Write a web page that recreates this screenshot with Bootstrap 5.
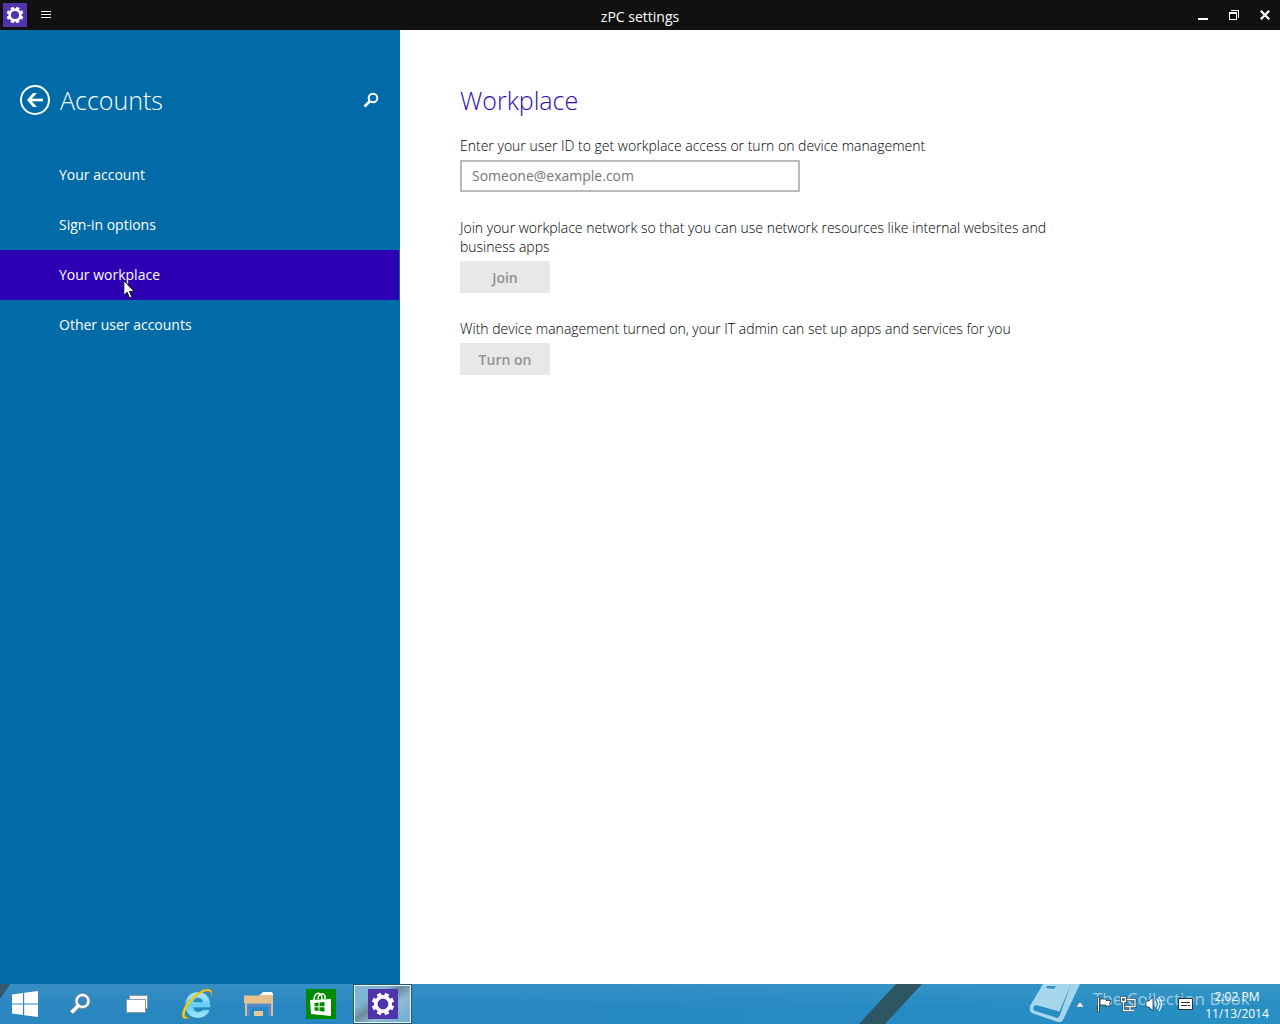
<!DOCTYPE html>
<html lang="en">
<head>
<meta charset="utf-8">
<meta name="viewport" content="width=device-width, initial-scale=1">
<title>zPC settings</title>
<link href="https://cdn.jsdelivr.net/npm/bootstrap@5.3.0/dist/css/bootstrap.min.css" rel="stylesheet">
<style>
  body { font-family: "Open Sans", "Noto Sans", sans-serif; font-size: 14px; line-height: 19px; color: #000; background: #fff; }
  .titlebar { display: grid; grid-template-columns: 1fr auto 1fr; height: 30px; background: #111; color: #fff; }
  .plain-btn { border: 0; padding: 0; background: none; color: inherit; display: inline-flex; align-items: center; justify-content: center; }
  .plain-btn svg, .tray svg { display: block; }
  .win-btn { width: 31px; height: 30px; }
  .app-mark { margin: 0 3px; }
  .side { width: 400px; background: #006ba6; color: #fff; padding-top: 50px; }
  .pane-title { font-size: 25px; line-height: 40px; font-weight: 300; margin: 0; }
  .side-head { height: 40px; margin-bottom: 30px; padding: 0 20px; gap: 10px; }
  .side .nav-link { height: 50px; padding: 15px 59px; line-height: 20px; color: #fff; margin-right: 1px; }
  .side .nav-link.active { background: #2e00b3; }
  .content-pane { padding: 50px 60px; }
  .content-pane .pane-title { color: #3409b4; margin-bottom: 16px; }
  .form-col { max-width: 600px; }
  .form-col label, .form-col p { display: block; margin: 0 0 5px; font-weight: 300; }
  .id-box { width: 340px; height: 32px; padding: 0 10px 2px; border: 2px solid #bababa; border-radius: 0; font-size: 14px; color: #000; }
  .id-box::placeholder { color: #767676; }
  .group { margin-bottom: 26px; }
  .flat-btn { width: 90px; height: 32px; border: 0; border-radius: 0; padding: 0; font-size: 14px; font-weight: 600; }
  .flat-btn:disabled { background: #e8e8e8; color: #929292; opacity: 1; }
  .pointer { position: absolute; left: 123px; top: 29px; z-index: 2; }
  .taskbar { height: 40px; color: #fff; overflow: hidden;
    background: linear-gradient(124deg, #34586c 8px, transparent 9px),
      linear-gradient(180deg, #fff1, transparent 60%), linear-gradient(90deg, #2a86bf, #2688c2 50%, #278fc2); }
  .stripe { position: absolute; left: 859px; top: 0; }
  .task { width: 59px; height: 40px; margin-left: 3px; }
  .tool { width: 57px; height: 40px; padding-left: 2px; }
  .start { width: 50px; height: 40px; }
  .task-on { border: 1px solid #24566f; box-shadow: inset 0 0 0 1px #e9f4fa; background: linear-gradient(145deg, #7fb4d5 0 30%, #6b8c9f 46%, #8fb9d1 62%, #6faed3); }
  .watermark { position: absolute; left: 1029px; top: 0; height: 40px; font-size: 17px; line-height: 30px; color: #ffffff8c; pointer-events: none; }
  .tray { position: relative; gap: 8px; padding-right: 13px; }
  .clock { font-size: 12px; line-height: 17px; width: 60px; white-space: nowrap; margin-left: 6px; padding-top: 4px; letter-spacing: normal; }
  .clock div { margin: 0 -4px; }
</style>
<script src="https://cdn.jsdelivr.net/npm/bootstrap@5.3.0/dist/js/bootstrap.bundle.min.js"></script>
</head>
<body class="d-flex flex-column min-vh-100">
<svg width="0" height="0" class="position-absolute" aria-hidden="true">
  <symbol id="gear" viewBox="-12 -12 24 24">
    <g stroke="#fff" fill="none"><circle r="7.200" stroke-width="3.600"/>
    <path stroke-width="4.400" d="M3.060 7.390 4.250 10.300M-3.060 7.390-4.250 10.300M3.060-7.390 4.250-10.300M-3.060-7.390-4.250-10.300M7.390 3.060 10.300 4.250M-7.390 3.060-10.300 4.250M7.390-3.060 10.300-4.250M-7.390-3.060-10.300-4.250"/></g>
  </symbol>
  <symbol id="lens" viewBox="0 0 16 16">
    <circle cx="10" cy="6" r="4.300" fill="none" stroke="#fff" stroke-width="2"/>
    <path d="M7 9 1.500 14.500" stroke="#fff" stroke-width="2.600"/>
  </symbol>
</svg>

<header class="titlebar">
  <div class="d-flex align-items-center">
    <svg class="app-mark" width="24" height="24" viewBox="0 0 24 24" role="img" aria-label="Settings"><path fill="#5133ab" d="M0 0h24v24H0z"/><use href="#gear" x="3" y="3" width="18" height="18"/></svg>
    <button class="plain-btn win-btn" type="button" aria-label="Menu"><svg width="10" height="8" viewBox="0 0 10 8"><path fill="#fff" d="M0 0h10v1H0zm0 3h10v1H0zm0 3h10v1H0z"/></svg></button>
  </div>
  <div class="lh-1 align-self-center pt-1">zPC settings</div>
  <div class="d-flex justify-content-end">
    <button class="plain-btn win-btn" type="button" aria-label="Minimize"><svg width="10" height="10" viewBox="0 0 10 10"><path fill="#fff" d="M0 8h10v2H0z"/></svg></button>
    <button class="plain-btn win-btn" type="button" aria-label="Restore"><svg width="10" height="10" viewBox="0 0 10 10"><path fill="#fff" d="M0 2h8v8H0zm1 2v5h6V4zM2 0h8v8H9V1H2z" fill-rule="evenodd"/></svg></button>
    <button class="plain-btn win-btn" type="button" aria-label="Close"><svg width="10" height="10" viewBox="0 0 10 10"><path stroke="#fff" stroke-width="2.200" d="m.8.8 8.400 8.400m0-8.400L.8 9.200"/></svg></button>
  </div>
</header>

<main class="d-flex flex-grow-1">
  <aside class="side flex-shrink-0">
    <div class="side-head d-flex align-items-center">
      <button class="plain-btn" type="button" aria-label="Back"><svg width="30" height="30" viewBox="0 0 30 30" fill="none" stroke="#fff"><circle cx="15" cy="15" r="14" stroke-width="2"/><path stroke-width="2.600" d="M23 15H9"/><path fill="#fff" stroke="none" d="m7 15 6-7h4l-6.300 7 6.300 7h-4z"/></svg></button>
      <h1 class="pane-title flex-grow-1">Accounts</h1>
      <button class="plain-btn" type="button" aria-label="Search"><svg width="17" height="16"><use href="#lens" width="16" height="16"/></svg></button>
    </div>
    <nav class="nav flex-column">
      <a class="nav-link" href="#">Your account</a>
      <a class="nav-link" href="#">Sign-in options</a>
      <a class="nav-link active position-relative" href="#" aria-current="page">Your workplace
        <svg class="pointer" width="12" height="20" viewBox="0 0 12 20" aria-hidden="true"><path fill="#fff" stroke="#111" d="M.8 1.500v15l3.300-3.200 2.400 5.600 2.400-1-2.400-5.500h4.700z"/></svg>
      </a>
      <a class="nav-link" href="#">Other user accounts</a>
    </nav>
  </aside>
  <section class="content-pane flex-grow-1">
    <h2 class="pane-title">Workplace</h2>
    <form class="form-col">
      <div class="group">
        <label for="userid">Enter your user ID to get workplace access or turn on device management</label>
        <input class="id-box d-block" id="userid" type="email" placeholder="Someone@example.com">
      </div>
      <div class="group">
        <p>Join your workplace network so that you can use network resources like internal websites and business apps</p>
        <button class="flat-btn d-block" type="button" disabled>Join</button>
      </div>
      <div class="group">
        <p>With device management turned on, your IT admin can set up apps and services for you</p>
        <button class="flat-btn d-block" type="button" disabled>Turn on</button>
      </div>
    </form>
  </section>
</main>

<footer class="taskbar position-relative d-flex">
  <svg class="stripe" width="64" height="40" aria-hidden="true"><path fill="#2d5662" d="M37 0h26L26 40H0z"/></svg>
  <button class="plain-btn start" type="button" aria-label="Start"><svg width="28" height="26" viewBox="0 0 28 26" fill="#fff"><path d="m1 3.500 11-1.500v10.500H1zM13.200 1.800 27 0v12.500H13.200zM1 13.600h11V24L1 22.500zm12.200 0H27V26l-13.800-1.800z"/></svg></button>
  <button class="plain-btn tool" type="button" aria-label="Search"><svg width="22" height="22" viewBox="0 0 22 22" fill="none"><path stroke="#7d8e97" stroke-width="5" d="m9.500 12.500-7 7"/><circle cx="13.500" cy="8" r="6" stroke="#7d8e97" stroke-width="4"/><path stroke="#fff" stroke-width="3.400" d="m9.500 12.500-7 7"/><circle cx="13.500" cy="8" r="6" stroke="#fff" stroke-width="2.400"/></svg></button>
  <button class="plain-btn tool" type="button" aria-label="Task view"><svg width="22" height="18" viewBox="0 0 22 18" stroke="#8c9ba3"><path fill="#f4f4f4" d="M3.500.5h18v13h-18z"/><path fill="#fff" d="M.5 4.500h19v13H.5z"/></svg></button>
  <button class="plain-btn task" type="button" aria-label="Internet Explorer"><svg width="32" height="32" viewBox="0 0 32 32"><defs><linearGradient id="ieblue" x2="0" y2="1"><stop stop-color="#b9f1fd"/><stop offset=".5" stop-color="#62cdf3"/><stop offset="1" stop-color="#a4e9fb"/></linearGradient></defs><path fill="url(#ieblue)" stroke="#248dbd" stroke-width=".4" fill-rule="evenodd" d="M29.500 19.500H12.500c.3 2.800 2 4.200 4.700 4.200 2.100 0 3.600-.7 4.500-2h7.200C27.200 26.800 22.500 30 17 30 9.500 30 4.200 24.700 4.200 17S9.500 4 17 4c8 0 13 5.500 12.500 15.500zM12.500 14h9.200c-.3-2.500-2-4-4.600-4s-4.200 1.500-4.600 4z"/><path fill="#f6cf23" stroke="#c99a12" stroke-width=".5" d="M29.800 8.400c1-3.900-.7-5.900-4-5.300-4 .6-9.400 3.900-14 8.700C6.400 17.500 3 24.300 4 27.800c.5 1.500 2 2 4.500 1.200-4 3-7.300 2-7.300-2.200 0-5.100 4-12 9.800-17.300C16.500 4.400 22.500 1 26.800 1c3.700 0 5 2.900 3 7.400z"/></svg></button>
  <button class="plain-btn task" type="button" aria-label="File Explorer"><svg width="30" height="26" viewBox="0 0 30 26"><path fill="#fff" d="M15 5 19 1h9l1 2v5H15z"/><path fill="#e6c18c" d="M0 4.500h15l3-.5h11v6H0z"/><path fill="#e6c18c" d="M0 6h29v6H0z"/><path fill="#a5a9b0" d="M2 12h25v3H2z"/><path fill="#d9bd98" d="M1 12h2v13H1zm26 0h2v13h-2z"/><path fill="#5289cb" d="M3 13h24v12H3z"/><path fill="#2789c1" d="M6 16h18v9H6z"/><path fill="#e9c992" d="M10 20h9v5h-9z"/></svg></button>
  <button class="plain-btn task" type="button" aria-label="Store"><svg width="30" height="30" viewBox="0 0 30 30"><path fill="#008a00" d="M0 0h30v30H0z"/><path fill="none" stroke="#fff" stroke-width="1.500" d="M8 11c0-6 4-8 6-6 2 1 2 4 2 6m-4-1c0-5 5-7 7-3v3"/><path fill="#fff" d="m4 11 21-1v17L5 25z"/><path fill="#008a00" d="m8.500 14 4-.4v3.700h-4zm5-.5 5-.6v4.400h-5zm-5 4.700h4V22l-4-.5zm5 0h5v4.500l-5-.6z"/></svg></button>
  <button class="plain-btn task task-on" type="button" aria-label="PC settings"><svg width="30" height="30" viewBox="0 0 30 30"><path fill="#5133ab" d="M0 0h30v30H0z"/><use href="#gear" x="3" y="3" width="24" height="24"/></svg></button>
  <div class="watermark d-flex">
    <svg width="52" height="40" viewBox="0 0 52 40" aria-hidden="true"><path fill="#a6d6ec" fill-rule="evenodd" d="M14 0h37L34 36q-2 3-5 2L4 29.500Q0 28 1 22zm28 0L30.500 27.500 7 21q-4 1-2 5.500l23.500 7.500 2-2zM18 2l-1 2 8 1 2-3z"/></svg>
    <span class="ms-2 ps-1">The Collection Book</span>
  </div>
  <div class="tray d-flex align-items-center ms-auto">
    <svg width="8" height="5"><path fill="#fff" stroke="#45606e" stroke-width=".5" d="M0 5 4 0l4 5z"/></svg>
    <svg class="ms-1" width="16" height="17" viewBox="0 0 16 17"><path fill="#fff" stroke="#24333b" stroke-width=".8" d="M1.500 1h2v15h-2zM4 3h6v1.500h5l-1.500 3L15 10H9.500V9H4z"/></svg>
    <svg width="17" height="16" viewBox="0 0 17 16" fill="none"><path stroke="#24333b" stroke-width="2.600" d="M7 3.500h8v7H5m5 0V14m-4 .5h8M3.500 6v8.500H6M1.500 1.500h4v4h-4z"/><path stroke="#fff" stroke-width="1.300" d="M7 3.500h8v7H5m5 0V14m-4 .5h8M3.500 6v8.500H6M1.500 1.500h4v4h-4z"/></svg>
    <svg width="17" height="16" viewBox="0 0 17 16"><path fill="#fff" stroke="#24333b" stroke-width=".8" d="M1 5h3l4-4v14l-4-4H1z"/><path fill="none" stroke="#fff" stroke-width="1.200" d="M10 5q2 3 0 6m2-8q3.500 5 0 10m2-12q5 7 0 14"/></svg>
    <svg class="ms-2" width="15" height="12" viewBox="0 0 15 12"><path fill="#fff" stroke="#24333b" d="M.5.500h14v11H.5z"/><path stroke="#24333b" d="M3 4.500h9m-9 3h6m1 0h2"/></svg>
    <div class="clock text-center align-self-start"><div>2:02 PM</div><div>11/13/2014</div></div>
  </div>
</footer>
</body>
</html>
